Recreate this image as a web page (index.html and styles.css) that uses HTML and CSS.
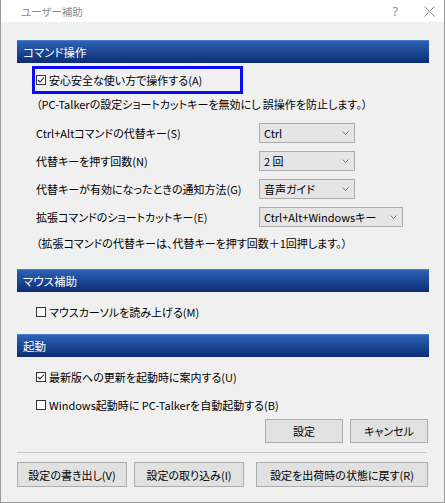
FILE: index.html
```html
<!DOCTYPE html>
<html lang="ja">
<head>
<meta charset="utf-8">
<link rel="stylesheet" href="styles.css">
</head>
<body>
<div class="window">
  <div class="titlebar">
    <span class="title">ユーザー補助</span>
    <span class="help">?</span>
    <svg class="close" width="11" height="11" viewBox="0 0 11 11"><path d="M0.5 0.5 L10.5 10.5 M10.5 0.5 L0.5 10.5" stroke="#8a8a8a" stroke-width="1" fill="none"/></svg>
  </div>
  <div class="content">
    <div class="section-head">コマンド操作</div>
    <div class="focus">
      <div class="check">
        <svg class="box" width="10" height="10" viewBox="0 0 10 10"><rect x="0.5" y="0.5" width="9" height="9" fill="#fff" stroke="#333"/><path d="M2 5 L4 7 L8 2.5" stroke="#222" stroke-width="1.1" fill="none"/></svg>
        <span>安心安全な使い方で操作する(A)</span>
      </div>
    </div>
    <div class="note">（PC-Talkerの設定ショートカットキーを無効にし 誤操作を防止します。）</div>
    <div class="rows">
      <div class="row">
        <span class="lbl">Ctrl+Altコマンドの代替キー(S)</span>
        <div class="combo"><span>Ctrl</span><svg class="chev" width="7" height="4" viewBox="0 0 7 4"><path d="M0.5 0.5 L3.5 3.5 L6.5 0.5" stroke="#777" fill="none"/></svg></div>
      </div>
      <div class="row">
        <span class="lbl">代替キーを押す回数(N)</span>
        <div class="combo"><span>2 回</span><svg class="chev" width="7" height="4" viewBox="0 0 7 4"><path d="M0.5 0.5 L3.5 3.5 L6.5 0.5" stroke="#777" fill="none"/></svg></div>
      </div>
      <div class="row">
        <span class="lbl">代替キーが有効になったときの通知方法(G)</span>
        <div class="combo"><span>音声ガイド</span><svg class="chev" width="7" height="4" viewBox="0 0 7 4"><path d="M0.5 0.5 L3.5 3.5 L6.5 0.5" stroke="#777" fill="none"/></svg></div>
      </div>
      <div class="row">
        <span class="lbl">拡張コマンドのショートカットキー(E)</span>
        <div class="combo wide"><span>Ctrl+Alt+Windowsキー</span><svg class="chev" width="7" height="4" viewBox="0 0 7 4"><path d="M0.5 0.5 L3.5 3.5 L6.5 0.5" stroke="#777" fill="none"/></svg></div>
      </div>
    </div>
    <div class="note note2">（拡張コマンドの代替キーは、代替キーを押す回数＋1回押します。）</div>

    <div class="section-head sec2">マウス補助</div>
    <div class="check item first">
      <svg class="box" width="10" height="10" viewBox="0 0 10 10"><rect x="0.5" y="0.5" width="9" height="9" fill="#fff" stroke="#333"/></svg>
      <span>マウスカーソルを読み上げる(M)</span>
    </div>

    <div class="section-head sec3">起動</div>
    <div class="check item first">
      <svg class="box" width="10" height="10" viewBox="0 0 10 10"><rect x="0.5" y="0.5" width="9" height="9" fill="#fff" stroke="#333"/><path d="M2 5 L4 7 L8 2.5" stroke="#222" stroke-width="1.1" fill="none"/></svg>
      <span>最新版への更新を起動時に案内する(U)</span>
    </div>
    <div class="check item">
      <svg class="box" width="10" height="10" viewBox="0 0 10 10"><rect x="0.5" y="0.5" width="9" height="9" fill="#fff" stroke="#333"/></svg>
      <span>Windows起動時に PC-Talkerを自動起動する(B)</span>
    </div>

    <div class="actions">
      <button class="btn small">設定</button>
      <button class="btn small">キャンセル</button>
    </div>
    <div class="sep"></div>
    <div class="bottom">
      <button class="btn b1">設定の書き出し(V)</button>
      <button class="btn b2">設定の取り込み(I)</button>
      <button class="btn b3">設定を出荷時の状態に戻す(R)</button>
    </div>
  </div>
</div>
</body>
</html>
```
FILE: styles.css
```css
* { box-sizing: border-box; }
html, body { margin: 0; padding: 0; }
body {
  width: 445px;
  height: 503px;
  background: #f0f0f0;
  font-family: "Noto Sans CJK JP", "Noto Sans", sans-serif;
  font-feature-settings: "palt";
  font-size: 11px;
  color: #000;
  white-space: nowrap;
}
.window {
  width: 445px;
  height: 503px;
  border: 1px solid #9a9a9a;
  border-top: none;
  background: #f0f0f0;
  display: flex;
  flex-direction: column;
}
.titlebar {
  height: 22px;
  background: #fff;
  display: flex;
  align-items: center;
  padding-left: 20px;
  padding-right: 9px;
}
.title {
  font-size: 10.5px;
  color: #8a8a8a;
  flex: 1;
}
.help {
  font-size: 12px;
  color: #8a8a8a;
  margin-right: 26px;
  font-family: "Noto Sans", sans-serif;
}
.close { display: block; }
.content {
  padding: 0 15px 0 16px;
  display: flex;
  flex-direction: column;
}
.section-head {
  height: 23px;
  margin-top: 18px;
  background: linear-gradient(#2c62b5, #0c2c72);
  border-top: 1px solid #4a7cc8;
  color: #fff;
  display: flex;
  align-items: center;
  padding-left: 6px;
  font-size: 11.5px;
}
.sec2 { margin-top: 14px; }
.sec3 { margin-top: 8px; }
.focus {
  margin-top: 3px;
  margin-left: 15px;
  width: 211px;
  height: 28px;
  border: 3px solid #0b0bf0;
  display: flex;
  align-items: center;
  padding-left: 1px;
}
.check {
  display: flex;
  align-items: center;
  gap: 3px;
}
.check .box { display: block; flex: none; }
.item {
  height: 28px;
  padding-left: 19px;
}
.item.first { margin-top: 6px; }
.note {
  height: 20px;
  display: flex;
  align-items: center;
  padding-left: 19px;
}
.note2 { height: 24px; }
.rows {
  margin-top: 5px;
  display: flex;
  flex-direction: column;
}
.row {
  height: 28px;
  display: flex;
  align-items: center;
  padding-left: 19px;
}
.lbl { width: 223px; flex: none; }
.combo {
  width: 96px;
  height: 20px;
  background: #e5e5e5;
  border: 1px solid #acacac;
  display: flex;
  align-items: center;
  justify-content: space-between;
  padding: 0 5px 0 4px;
}
.combo.wide { width: 144px; }
.chev { display: block; }
.actions {
  display: flex;
  justify-content: flex-end;
  gap: 7px;
  padding-right: 1px;
}
.btn {
  font-family: inherit;
  font-feature-settings: "palt";
  font-size: 11px;
  color: #000;
  background: #e1e1e1;
  border: 1px solid #adadad;
  margin: 0;
  padding: 0;
  display: flex;
  align-items: center;
  justify-content: center;
}
.small { width: 78px; height: 24px; }
.sep {
  margin-top: 9px;
  height: 1px;
  background: #c6c6c6;
  margin-right: 2px;
}
.bottom {
  margin-top: 9px;
  display: flex;
}
.bottom .btn { height: 25px; }
.b1 { width: 110px; }
.b2 { width: 110px; margin-left: 7px; }
.b3 { width: 172px; margin-left: 12px; }
```
